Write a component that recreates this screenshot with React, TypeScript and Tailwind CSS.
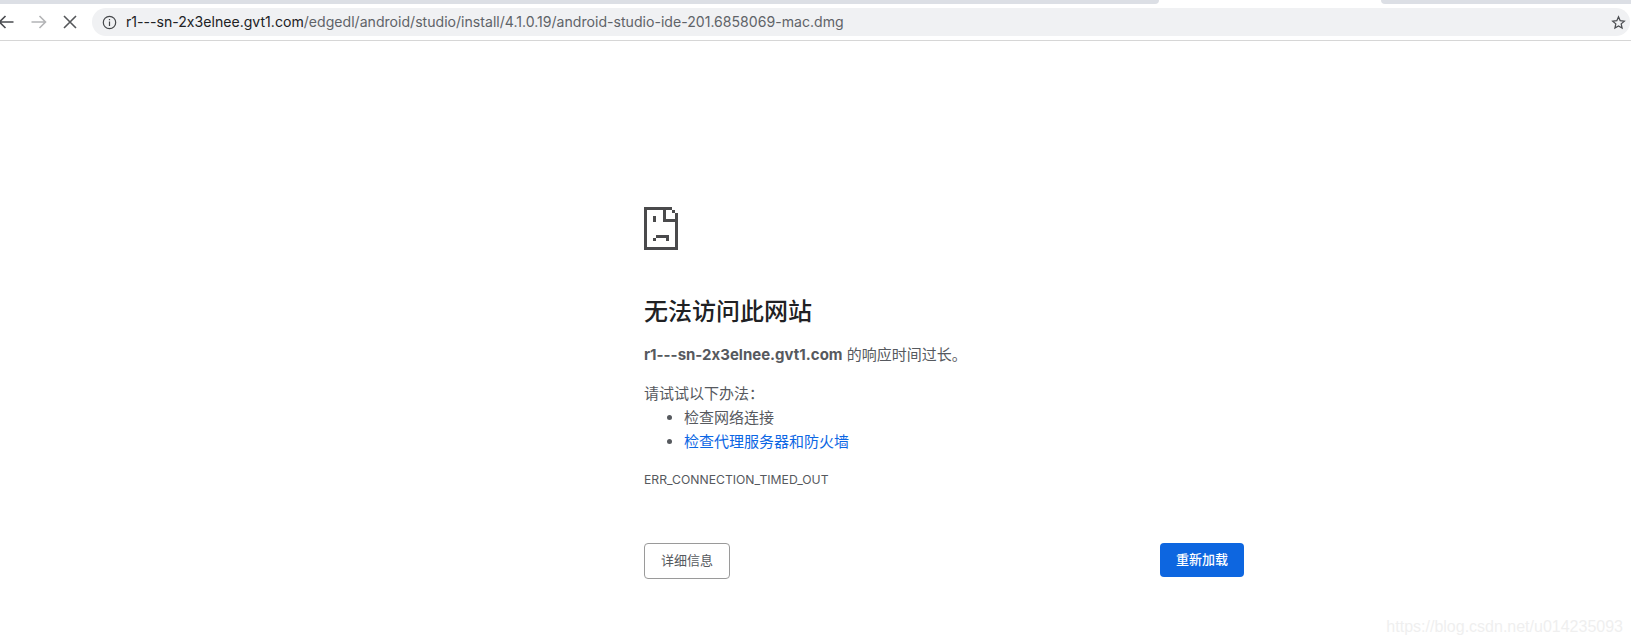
import React from 'react';

const sans = '[font-family:Inter,"Noto_Sans_CJK_SC",sans-serif] [font-feature-settings:"calt"_0]';

const SadTab: React.FC = () => (
  <svg width="34" height="43" viewBox="0 0 11 14" shapeRendering="crispEdges" fill="#4a4a4c">
    <rect x="0" y="0" width="1" height="14" />
    <rect x="0" y="0" width="9" height="1" />
    <rect x="0" y="13" width="11" height="1" />
    <rect x="10" y="2" width="1" height="12" />
    <rect x="9" y="1" width="1" height="1" />
    <rect x="6" y="0" width="1" height="5" />
    <rect x="6" y="4" width="5" height="1" />
    <rect x="3" y="3" width="1" height="2" />
    <rect x="4" y="9" width="4" height="1" />
    <rect x="3" y="10" width="1" height="1" />
    <rect x="7" y="10" width="1" height="1" />
  </svg>
);

const NavIcon: React.FC<{ d: string; color: string; className?: string }> = ({ d, color, className }) => (
  <svg width="16" height="16" viewBox="0 0 16 16" fill="none" stroke={color} strokeWidth="1.6" className={className}>
    <path d={d} />
  </svg>
);

const App: React.FC = () => {
  return (
    <div className={`min-h-screen bg-white relative overflow-hidden ${sans}`}>
      {/* Tab strip */}
      <div className="flex h-1 bg-white">
        <div className="w-[1159px] bg-[#dcdfe5] rounded-br-[4px]" />
        <div className="flex-1" />
        <div className="w-[250px] bg-[#dcdfe5] rounded-bl-[4px]" />
      </div>

      {/* Toolbar */}
      <div className="flex items-center h-[36px] border-b border-[#d6d6d6] box-content">
        <NavIcon className="ml-[-2px]" color="#4a4c50" d="M15.500 8H1.500M7.500 2 1.500 8l6 6" />
        <NavIcon className="ml-[17px]" color="#b3b4b6" d="M.5 8h14M8.500 2l6 6-6 6" />
        <NavIcon className="ml-[15px]" color="#55575a" d="M2 2l12 12M14 2 2 14" />
        <div className="ml-[14px] flex-1 mr-px h-7 rounded-full bg-[#f0f1f3] flex items-center pl-[10px] pr-1">
          <svg width="15" height="15" viewBox="0 0 15 15" fill="none" stroke="#45474a" strokeWidth="1.200">
            <circle cx="7.500" cy="7.500" r="6.200" />
            <path d="M7.500 6.500v4.500M7.500 4v1.300" />
          </svg>
          <span className="ml-[9px] text-[14.1px] text-[#5f6368] whitespace-nowrap">
            <span className="text-[#202124]">r1---sn-2x3elnee.gvt1.com</span>
            /edgedl/android/studio/install/4.1.0.19/android-studio-ide-201.6858069-mac.dmg
          </span>
          <svg className="ml-auto" width="15" height="15" viewBox="0 0 24 24" fill="none" stroke="#4a4c50" strokeWidth="2">
            <path d="M12 3l2.700 6.100 6.600.7-5 4.400 1.400 6.500-5.700-3.300-5.700 3.300 1.400-6.500-5-4.400 6.600-.7z" />
          </svg>
        </div>
      </div>

      {/* Error page */}
      <div className="ml-[644px] w-[600px] pt-[166px]">
        <SadTab />
        <h1 className="mt-[46px] text-[24px] leading-[32px] font-medium text-[#202124]">无法访问此网站</h1>
        <p className="mt-[15px] text-[15px] leading-[24px] text-[#56595e]">
          <span className="font-bold">r1---sn-2x3elnee.gvt1.com</span> 的响应时间过长。
        </p>
        <p className="mt-[15px] text-[15px] leading-[24px] text-[#56595e]">请试试以下办法：</p>
        <ul className="list-disc pl-10 text-[15px] leading-[24px] text-[#56595e]">
          <li>检查网络连接</li>
          <li>
            <span className="text-[#0b66e4]">检查代理服务器和防火墙</span>
          </li>
        </ul>
        <div className="mt-[18px] text-[12.2px] leading-[16px] text-[#56595e]">ERR_CONNECTION_TIMED_OUT</div>
        <div className="mt-[55px] flex justify-between">
          <button className="w-[86px] h-[36px] rounded border border-[#9a9a9a] bg-white text-[13px] text-[#56595e]">详细信息</button>
          <button className="w-[84px] h-[34px] rounded bg-[#0d66e0] text-[13px] font-medium text-white">重新加载</button>
        </div>
      </div>

      {/* Watermark */}
      <div className="absolute right-[8px] top-[617px] text-[16px] leading-[20px] text-[#efefef] font-['Liberation_Sans',sans-serif]">
        https://blog.csdn.net/u014235093
      </div>
    </div>
  );
};

export default App;
